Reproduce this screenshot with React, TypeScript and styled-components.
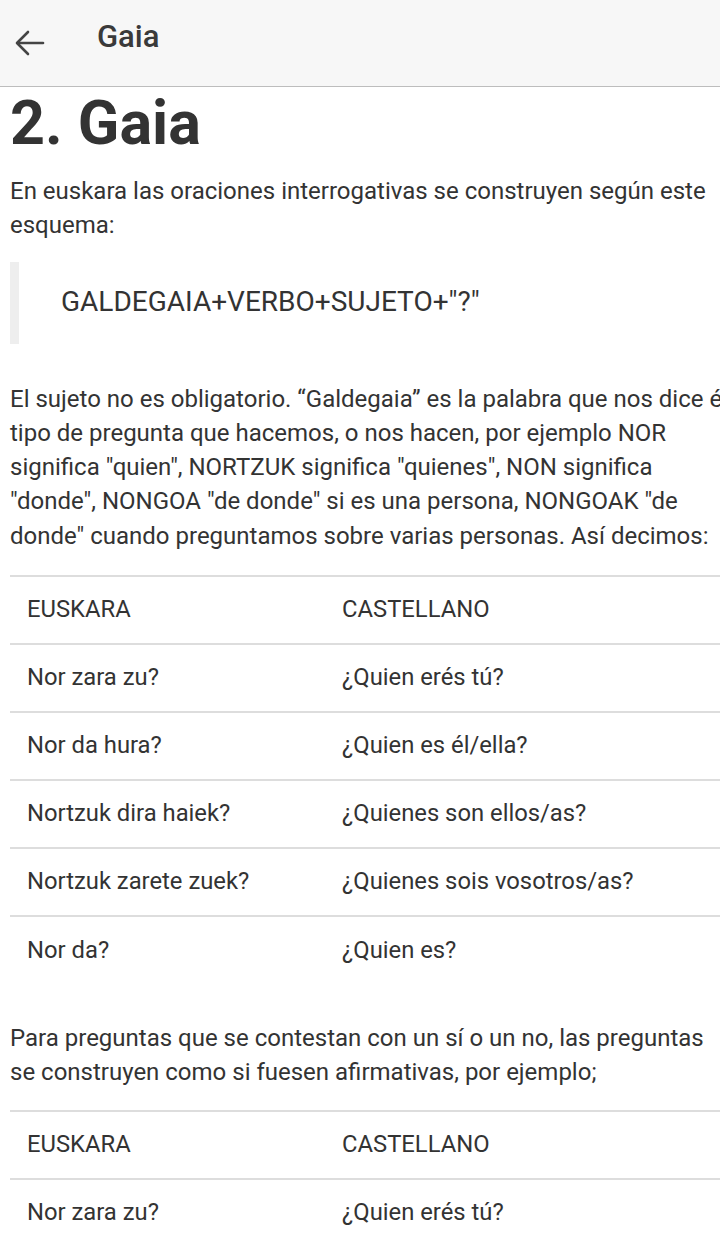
import React from "react";
import styled, { createGlobalStyle } from "styled-components";

const Global = createGlobalStyle`
  html, body { margin: 0; padding: 0; background: #fff; overflow-x: hidden; }
  body { font-family: Roboto, "Noto Sans", sans-serif; color: #333; }
`;

const Header = styled.header`
  height: 86px;
  background: #f7f7f7;
  border-bottom: 1px solid #bdbdbd;
  display: flex;
  align-items: center;
  box-sizing: content-box;
`;

const BackButton = styled.div`
  width: 60px;
  height: 60px;
  display: flex;
  align-items: center;
  justify-content: center;
  color: #444;
`;

const HeaderTitle = styled.div`
  margin-left: 37px;
  margin-top: -13px;
  font-size: 31px;
  font-weight: 500;
  color: #3a3a3a;
`;

const Content = styled.main`
  width: 740px;
  box-sizing: border-box;
  padding: 0 10px;
`;

const Title = styled.h1`
  margin: 0;
  padding-top: 2px;
  font-size: 61px;
  line-height: 68px;
  font-weight: 700;
  color: #333;
`;

const Para = styled.p<{ $top: number }>`
  margin: ${(p) => p.$top}px 0 0 0;
  font-size: 24px;
  line-height: 34.3px;
  color: #333;
`;

const Quote = styled.blockquote`
  margin: 19px 0 0 0;
  border-left: 9px solid #eeeeee;
  height: 82px;
  display: flex;
  align-items: center;
  padding-left: 42px;
  padding-bottom: 3px;
  box-sizing: border-box;
  font-size: 28px;
  color: #333;
`;

const Table = styled.table<{ $top: number }>`
  margin-top: ${(p) => p.$top}px;
  width: 100%;
  border-collapse: collapse;
  font-size: 23.8px;
  color: #333;
`;

const Row = styled.tr`
  border-top: 2px solid #dddddd;
  height: 68px;
`;

const Cell = styled.td`
  padding: 0 17px 2px;
  vertical-align: middle;
  &:first-child { width: 281px; }
`;

type Pair = [string, string];

const table1: Pair[] = [
  ["EUSKARA", "CASTELLANO"],
  ["Nor zara zu?", "¿Quien erés tú?"],
  ["Nor da hura?", "¿Quien es él/ella?"],
  ["Nortzuk dira haiek?", "¿Quienes son ellos/as?"],
  ["Nortzuk zarete zuek?", "¿Quienes sois vosotros/as?"],
  ["Nor da?", "¿Quien es?"],
];

const table2: Pair[] = [
  ["EUSKARA", "CASTELLANO"],
  ["Nor zara zu?", "¿Quien erés tú?"],
];

const DataTable = ({ rows, top }: { rows: Pair[]; top: number }) => (
  <Table $top={top}>
    <tbody>
      {rows.map(([a, b], i) => (
        <Row key={i}>
          <Cell>{a}</Cell>
          <Cell>{b}</Cell>
        </Row>
      ))}
    </tbody>
  </Table>
);

export default function App() {
  return (
    <>
      <Global />
      <Header>
        <BackButton>
          <svg width="30" height="26" viewBox="0 0 30 26" fill="none" stroke="currentColor" strokeWidth="2.6" strokeLinecap="round" strokeLinejoin="round">
            <path d="M28 13H3" />
            <path d="M13 2L2 13l11 11" />
          </svg>
        </BackButton>
        <HeaderTitle>Gaia</HeaderTitle>
      </Header>
      <Content>
        <Title>2. Gaia</Title>
        <Para $top={17}>
          En euskara las oraciones interrogativas se construyen según este esquema:
        </Para>
        <Quote>GALDEGAIA+VERBO+SUJETO+"?"</Quote>
        <Para $top={38}>
          El sujeto no es obligatorio. “Galdegaia” es la palabra que nos dice él tipo de pregunta que hacemos, o nos hacen, por ejemplo NOR significa "quien", NORTZUK significa "quienes", NON significa "donde", NONGOA "de donde" si es una persona, NONGOAK "de donde" cuando preguntamos sobre varias personas. Así decimos:
        </Para>
        <DataTable rows={table1} top={22} />
        <Para $top={37}>
          Para preguntas que se contestan con un sí o un no, las preguntas se construyen como si fuesen afirmativas, por ejemplo;
        </Para>
        <DataTable rows={table2} top={20} />
      </Content>
    </>
  );
}
